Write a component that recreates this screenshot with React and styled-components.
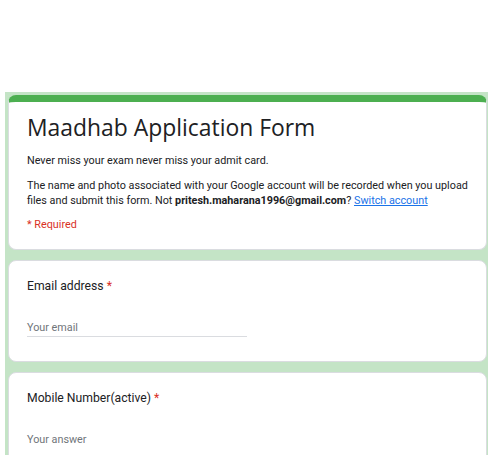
import React from "react";
import styled, { createGlobalStyle } from "styled-components";

const GlobalStyle = createGlobalStyle`
  html, body {
    margin: 0;
    padding: 0;
    background: #ffffff;
    overflow: hidden;
  }
  body {
    font-family: Roboto, "Liberation Sans", Arial, sans-serif;
    color: #202124;
  }
`;

const Page = styled.div`
  padding: 92px 0 0 5px;
  width: 483px;
  height: 363px;
  overflow: hidden;
`;

const Panel = styled.div`
  background: #c4e4c6;
  min-height: 100%;
  padding: 3px 1px 0 3px;
  display: flex;
  flex-direction: column;
  gap: 10px;
  box-sizing: border-box;
`;

const Card = styled.div`
  background: #ffffff;
  border: 1px solid #dadce0;
  border-radius: 8px;
  overflow: hidden;
  display: flex;
  flex-direction: column;
  align-items: flex-start;
  padding: ${(p) => p.$pad || "24px 18px 24px 18px"};
`;

const HeaderCard = styled(Card)`
  border-top: 7px solid #4caf50;
  padding: 11px 18px 17px 18px;
`;

const Title = styled.h1`
  margin: 0 0 10px 0;
  font-family: "Open Sans", Roboto, sans-serif;
  font-size: 22.9px;
  font-weight: 400;
  line-height: 30px;
  letter-spacing: 0;
  color: #202124;
`;

const Text = styled.p`
  margin: 0 0 10px 0;
  font-size: 10.8px;
  line-height: 15px;
  color: #202124;
`;

const Link = styled.a`
  color: #1a73e8;
  text-decoration: underline;
`;

const Required = styled.div`
  margin-top: -1px;
  font-size: 10.8px;
  line-height: 15px;
  color: #d93025;
`;

const Label = styled.div`
  font-size: 12.2px;
  line-height: 18px;
  color: #202124;
`;

const Star = styled.span`
  color: #d93025;
`;

const Input = styled.div`
  width: 220px;
  margin-top: 25px;
  border-bottom: ${(p) => (p.$line ? "1px solid #dadce0" : "none")};
  font-size: 10.8px;
  line-height: 16px;
  color: #70757a;
`;

export default function App() {
  return (
    <>
      <GlobalStyle />
      <Page>
        <Panel>
          <HeaderCard>
            <Title>Maadhab Application Form</Title>
            <Text>Never miss your exam never miss your admit card.</Text>
            <Text>
              The name and photo associated with your Google account will be
              recorded when you upload files and submit this form. Not{" "}
              <b>pritesh.maharana1996@gmail.com</b>?{" "}
              <Link href="#">Switch account</Link>
            </Text>
            <Required>* Required</Required>
          </HeaderCard>
          <Card $pad="16px 18px 24px 18px">
            <Label>
              Email address <Star>*</Star>
            </Label>
            <Input $line>Your email</Input>
          </Card>
          <Card $pad="16px 18px 24px 18px">
            <Label>
              Mobile Number(active) <Star>*</Star>
            </Label>
            <Input>Your answer</Input>
          </Card>
        </Panel>
      </Page>
    </>
  );
}
